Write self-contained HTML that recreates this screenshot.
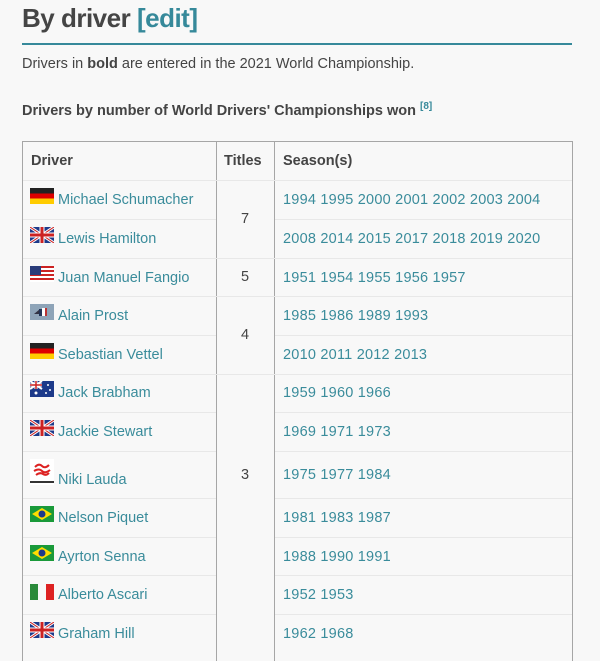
<!DOCTYPE html>
<html><head><meta charset="utf-8">
<style>
*{margin:0;padding:0;box-sizing:border-box}
body{width:600px;height:650px;overflow:hidden;background:#f8f8f8;font-family:"Liberation Sans",sans-serif;color:#444;position:relative}
.a{position:absolute;white-space:nowrap}
h1{position:absolute;left:22px;top:3px;font-size:26px;line-height:30px;font-weight:bold;color:#454545;letter-spacing:-0.5px}
h1 span{color:#36899a}
.rule{position:absolute;left:22px;top:43px;width:550px;height:2px;background:#36899a}
.l{color:#3a8c9b;font-size:14.5px}
.s{letter-spacing:0.22px}
.h{font-weight:bold;font-size:14.5px;color:#444}
.v{position:absolute;width:1px;background:#a6a6a6;top:141px;height:520px}
.hl{position:absolute;height:1px;background:#e8e8e8}
.f{position:absolute;left:30px;width:24px;height:16px;overflow:hidden}
</style></head><body>
<h1>By driver <span>[edit]</span></h1>
<div class="rule"></div>
<div class="a" style="left:22px;top:56px;font-size:14.5px;color:#444">Drivers in <b>bold</b> are entered in the 2021 World Championship.</div>
<div class="a" style="left:22px;top:101px;font-size:14.5px;font-weight:bold;color:#444">Drivers by number of World Drivers' Championships won <sup style="color:#36899a;font-size:10px">[8]</sup></div>

<div style="position:absolute;left:22px;top:141px;width:551px;height:1px;background:#a6a6a6"></div>
<div class="v" style="left:22px"></div>
<div class="v" style="left:216px"></div>
<div class="v" style="left:274px"></div>
<div class="v" style="left:572px"></div>

<div class="a h" style="left:31px;top:153px">Driver</div>
<div class="a h" style="left:224px;top:153px">Titles</div>
<div class="a h" style="left:283px;top:153px">Season(s)</div>

<div class="hl" style="left:23px;width:549px;top:180px"></div>
<div class="hl" style="left:23px;width:549px;top:258px"></div>
<div class="hl" style="left:23px;width:549px;top:296px"></div>
<div class="hl" style="left:23px;width:549px;top:374px"></div>
<div class="hl" style="left:23px;width:193px;top:219px"></div><div class="hl" style="left:275px;width:297px;top:219px"></div>
<div class="hl" style="left:23px;width:193px;top:335px"></div><div class="hl" style="left:275px;width:297px;top:335px"></div>
<div class="hl" style="left:23px;width:193px;top:412px"></div><div class="hl" style="left:275px;width:297px;top:412px"></div>
<div class="hl" style="left:23px;width:193px;top:451px"></div><div class="hl" style="left:275px;width:297px;top:451px"></div>
<div class="hl" style="left:23px;width:193px;top:498px"></div><div class="hl" style="left:275px;width:297px;top:498px"></div>
<div class="hl" style="left:23px;width:193px;top:537px"></div><div class="hl" style="left:275px;width:297px;top:537px"></div>
<div class="hl" style="left:23px;width:193px;top:575px"></div><div class="hl" style="left:275px;width:297px;top:575px"></div>
<div class="hl" style="left:23px;width:193px;top:614px"></div><div class="hl" style="left:275px;width:297px;top:614px"></div>

<div class="a" style="left:241px;top:211px;font-size:14.5px">7</div>
<div class="a" style="left:241px;top:269px;font-size:14.5px">5</div>
<div class="a" style="left:241px;top:327px;font-size:14.5px">4</div>
<div class="a" style="left:241px;top:467px;font-size:14.5px">3</div>

<div class="f" style="top:188px;background:linear-gradient(#222 33%,#d00 33%,#d00 66%,#fc0 66%)"></div>
<div class="f" style="top:227px"><svg width="24" height="16"><rect width="24" height="16" fill="#1d3a8a"/><path d="M0 0L24 16M24 0L0 16" stroke="#fff" stroke-width="3"/><path d="M0 0L24 16M24 0L0 16" stroke="#c22" stroke-width="1"/><path d="M12 0V16M0 8H24" stroke="#fff" stroke-width="5"/><path d="M12 0V16M0 8H24" stroke="#c22" stroke-width="3"/></svg></div>
<div class="f" style="top:266px"><svg width="24" height="16"><rect width="24" height="16" fill="#fff"/><g fill="#c22"><rect y="0" width="24" height="2"/><rect y="4" width="24" height="2"/><rect y="8" width="24" height="2"/><rect y="12" width="24" height="2"/></g><rect width="11" height="9" fill="#2a3c7a"/></svg></div>
<div class="f" style="top:304px;background:#8ea4b8"><svg width="24" height="16"><path d="M4 10L10 5L12 10Z" fill="#334"/><rect x="12" y="4" width="3" height="8" fill="#fff"/><rect x="9" y="5" width="3" height="7" fill="#235"/><rect x="15" y="4" width="2" height="8" fill="#b33"/></svg></div>
<div class="f" style="top:343px;background:linear-gradient(#222 33%,#d00 33%,#d00 66%,#fc0 66%)"></div>
<div class="f" style="top:381px"><svg width="24" height="16"><rect width="24" height="16" fill="#1d3a8a"/><path d="M0 0L12 8M12 0L0 8" stroke="#fff" stroke-width="2"/><path d="M6 0V8M0 4H12" stroke="#fff" stroke-width="3"/><path d="M6 0V8M0 4H12" stroke="#c22" stroke-width="1.5"/><circle cx="6" cy="12" r="1.5" fill="#fff"/><circle cx="18" cy="4" r="1" fill="#fff"/><circle cx="20" cy="9" r="1" fill="#fff"/><circle cx="16" cy="12" r="1" fill="#fff"/></svg></div>
<div class="f" style="top:420px"><svg width="24" height="16"><rect width="24" height="16" fill="#1d3a8a"/><path d="M0 0L24 16M24 0L0 16" stroke="#fff" stroke-width="3"/><path d="M0 0L24 16M24 0L0 16" stroke="#c22" stroke-width="1"/><path d="M12 0V16M0 8H24" stroke="#fff" stroke-width="5"/><path d="M12 0V16M0 8H24" stroke="#c22" stroke-width="3"/></svg></div>
<div class="f" style="top:459px;height:26px"><svg width="24" height="26"><rect width="24" height="26" fill="#fff"/><path d="M5 8Q9 4 12 7T19 6M4 12Q9 9 12 12T20 11M6 16Q10 13 13 15T19 14" stroke="#d22" stroke-width="2" fill="none"/><rect y="22" width="24" height="2" fill="#333"/></svg></div>
<div class="f" style="top:506px"><svg width="24" height="16"><rect width="24" height="16" fill="#1a9a3a"/><path d="M12 2L22 8L12 14L2 8Z" fill="#fd0"/><circle cx="12" cy="8" r="3.5" fill="#1d3a8a"/></svg></div>
<div class="f" style="top:545px"><svg width="24" height="16"><rect width="24" height="16" fill="#1a9a3a"/><path d="M12 2L22 8L12 14L2 8Z" fill="#fd0"/><circle cx="12" cy="8" r="3.5" fill="#1d3a8a"/></svg></div>
<div class="f" style="top:584px;background:linear-gradient(90deg,#2a8a3a 33%,#f8f8f8 33%,#f8f8f8 66%,#d22 66%)"></div>
<div class="f" style="top:622px"><svg width="24" height="16"><rect width="24" height="16" fill="#1d3a8a"/><path d="M0 0L24 16M24 0L0 16" stroke="#fff" stroke-width="3"/><path d="M0 0L24 16M24 0L0 16" stroke="#c22" stroke-width="1"/><path d="M12 0V16M0 8H24" stroke="#fff" stroke-width="5"/><path d="M12 0V16M0 8H24" stroke="#c22" stroke-width="3"/></svg></div>

<div class="a l" style="left:58px;top:192px">Michael Schumacher</div>
<div class="a l" style="left:58px;top:231px">Lewis Hamilton</div>
<div class="a l" style="left:58px;top:270px">Juan Manuel Fangio</div>
<div class="a l" style="left:58px;top:308px">Alain Prost</div>
<div class="a l" style="left:58px;top:347px">Sebastian Vettel</div>
<div class="a l" style="left:58px;top:385px">Jack Brabham</div>
<div class="a l" style="left:58px;top:424px">Jackie Stewart</div>
<div class="a l" style="left:58px;top:472px">Niki Lauda</div>
<div class="a l" style="left:58px;top:510px">Nelson Piquet</div>
<div class="a l" style="left:58px;top:549px">Ayrton Senna</div>
<div class="a l" style="left:58px;top:587px">Alberto Ascari</div>
<div class="a l" style="left:58px;top:626px">Graham Hill</div>

<div class="a l s" style="left:283px;top:192px">1994 1995 2000 2001 2002 2003 2004</div>
<div class="a l s" style="left:283px;top:231px">2008 2014 2015 2017 2018 2019 2020</div>
<div class="a l s" style="left:283px;top:270px">1951 1954 1955 1956 1957</div>
<div class="a l s" style="left:283px;top:308px">1985 1986 1989 1993</div>
<div class="a l s" style="left:283px;top:347px">2010 2011 2012 2013</div>
<div class="a l s" style="left:283px;top:385px">1959 1960 1966</div>
<div class="a l s" style="left:283px;top:424px">1969 1971 1973</div>
<div class="a l s" style="left:283px;top:467px">1975 1977 1984</div>
<div class="a l s" style="left:283px;top:510px">1981 1983 1987</div>
<div class="a l s" style="left:283px;top:549px">1988 1990 1991</div>
<div class="a l s" style="left:283px;top:587px">1952 1953</div>
<div class="a l s" style="left:283px;top:626px">1962 1968</div>
</body></html>
